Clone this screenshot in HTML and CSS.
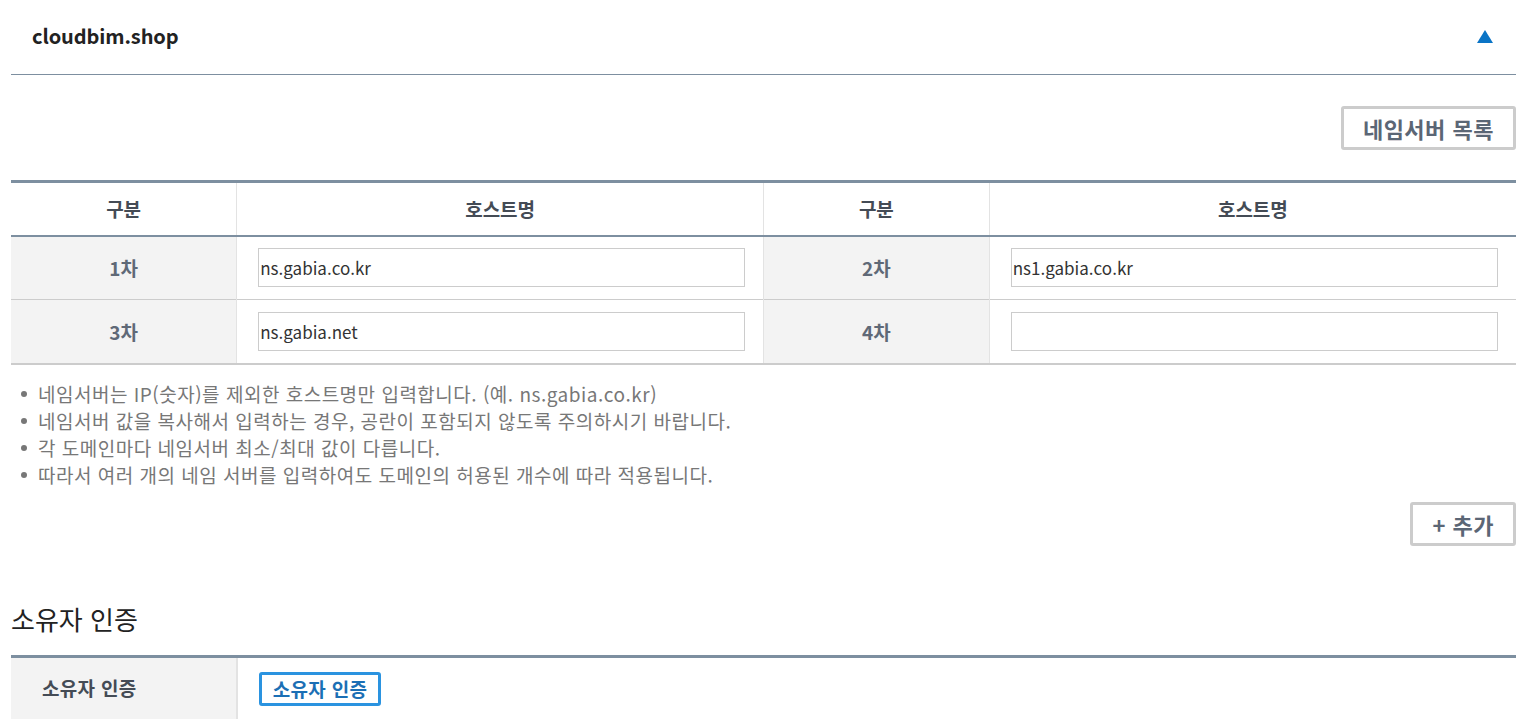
FILE: index.html
```html
<!DOCTYPE html>
<html lang="ko">
<head>
<meta charset="utf-8">
<title>cloudbim.shop</title>
<link rel="stylesheet" href="styles.css">
</head>
<body>
<div class="wrap">
  <div class="domain-head">
    <h2 class="domain-name">cloudbim.shop</h2>
    <span class="toggle" aria-label="접기"></span>
  </div>

  <div class="btn-row first">
    <button class="btn-gray">네임서버 목록</button>
  </div>

  <table class="ns-table">
    <colgroup>
      <col class="c-label"><col class="c-host"><col class="c-label"><col class="c-host">
    </colgroup>
    <thead>
      <tr><th>구분</th><th>호스트명</th><th>구분</th><th>호스트명</th></tr>
    </thead>
    <tbody>
      <tr>
        <th>1차</th><td><input type="text" value="ns.gabia.co.kr"></td>
        <th>2차</th><td><input type="text" value="ns1.gabia.co.kr"></td>
      </tr>
      <tr>
        <th>3차</th><td><input type="text" value="ns.gabia.net"></td>
        <th>4차</th><td><input type="text" value=""></td>
      </tr>
    </tbody>
  </table>

  <ul class="notes">
    <li>네임서버는 IP(숫자)를 제외한 호스트명만 입력합니다. (예. ns.gabia.co.kr)</li>
    <li>네임서버 값을 복사해서 입력하는 경우, 공란이 포함되지 않도록 주의하시기 바랍니다.</li>
    <li>각 도메인마다 네임서버 최소/최대 값이 다릅니다.</li>
    <li>따라서 여러 개의 네임 서버를 입력하여도 도메인의 허용된 개수에 따라 적용됩니다.</li>
  </ul>

  <div class="btn-row">
    <button class="btn-gray">+ 추가</button>
  </div>

  <h3 class="section-title">소유자 인증</h3>

  <table class="owner-table">
    <colgroup><col class="c-label"><col></colgroup>
    <tbody>
      <tr><th>소유자 인증</th><td><button class="btn-blue">소유자 인증</button></td></tr>
    </tbody>
  </table>
</div>
</body>
</html>
```

FILE: styles.css
```css
* { box-sizing: border-box; }
html, body { margin: 0; padding: 0; background: #fff; }
body {
  font-family: "Noto Sans CJK KR", "Open Sans", sans-serif;
  color: #333;
}
.wrap { padding: 0 9px 0 11px; }

.domain-head {
  height: 75px;
  display: flex;
  align-items: center;
  justify-content: space-between;
  padding: 0 23px 0 21px;
  border-bottom: 1px solid #7d8fa0;
}
.domain-name {
  margin: 0;
  padding-bottom: 4px;
  font-size: 20px;
  font-weight: 700;
  color: #222;
  letter-spacing: -0.1px;
}
.toggle {
  width: 0; height: 0;
  margin-bottom: 2px;
  border-left: 8px solid transparent;
  border-right: 8px solid transparent;
  border-bottom: 13px solid #0a74c6;
}

.btn-row { display: flex; justify-content: flex-end; }
.btn-row.first { margin-top: 31px; margin-bottom: 30px; }
.btn-gray {
  height: 44px;
  padding: 0 19px;
  background: #fff;
  border: 3px solid #cccccc;
  border-radius: 3px;
  font-family: inherit;
  font-size: 22px;
  letter-spacing: 0.5px;
  font-weight: 700;
  color: #5b6675;
}

table { width: 100%; border-collapse: collapse; table-layout: fixed; }
.c-label { width: 15%; }
.c-host { width: 35%; }

.ns-table { border-top: 3px solid #7d8fa0; border-bottom: 2px solid #cccccc; }
.ns-table thead th {
  height: 54px;
  padding-bottom: 2px;
  font-size: 19px;
  font-weight: 700;
  color: #444b55;
  background: #fff;
  border-bottom: 2px solid #7d8fa0;
  border-left: 1px solid #e3e3e3;
}
.ns-table thead th:first-child { border-left: 0; }
.ns-table tbody th {
  height: 64px;
  background: #f3f3f3;
  font-size: 19px;
  font-weight: 700;
  color: #5f6977;
  border-left: 1px solid #e3e3e3;
  border-right: 1px solid #e3e3e3;
}
.ns-table tbody th:first-child { border-left: 0; }
.ns-table tbody tr + tr th,
.ns-table tbody tr + tr td { border-top: 1px solid #cccccc; }
.ns-table td { padding: 0 18px 0 21px; }
.ns-table input {
  display: block;
  width: 100%;
  height: 39px;
  padding: 0 1px;
  border: 1px solid #cccccc;
  font-family: inherit;
  font-size: 17px;
  color: #333;
  background: #fff;
}

.notes {
  list-style: none;
  margin: 15px 0 14px;
  padding: 0 0 0 10px;
}
.notes li {
  position: relative;
  padding-left: 17px;
  font-size: 19px;
  line-height: 27px;
  color: #777;
  letter-spacing: 0.5px;
}
.notes li::before {
  content: "";
  position: absolute;
  left: 0; top: 11px;
  width: 6px; height: 6px;
  border-radius: 50%;
  background: #777;
}

.section-title {
  margin: 56px 0 19px;
  font-size: 26px;
  line-height: 34px;
  font-weight: 400;
  color: #222;
}

.owner-table { border-top: 3px solid #7d8fa0; }
.owner-table th {
  height: 72px;
  vertical-align: top;
  padding: 16px 0 0 31px;
  text-align: left;
  background: #f3f3f3;
  font-size: 19px;
  letter-spacing: 0.3px;
  font-weight: 700;
  color: #444b55;
  border-right: 2px solid #e3e3e3;
}
.owner-table td { vertical-align: top; padding: 14px 21px 0; }
.btn-blue {
  height: 34px;
  padding: 0 11px;
  background: #fff;
  border: 3px solid #2a93e0;
  border-radius: 3px;
  font-family: inherit;
  font-size: 19px;
  letter-spacing: 0.3px;
  font-weight: 700;
  color: #1b6fb5;
}
```
